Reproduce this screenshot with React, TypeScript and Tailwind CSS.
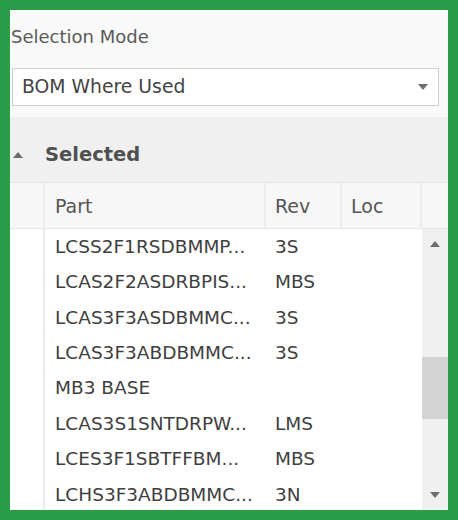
const ROWS: { part: string; rev: string }[] = [
  { part: 'LCSS2F1RSDBMMP...', rev: '3S' },
  { part: 'LCAS2F2ASDRBPIS...', rev: 'MBS' },
  { part: 'LCAS3F3ASDBMMC...', rev: '3S' },
  { part: 'LCAS3F3ABDBMMC...', rev: '3S' },
  { part: 'MB3 BASE', rev: '' },
  { part: 'LCAS3S1SNTDRPW...', rev: 'LMS' },
  { part: 'LCES3F1SBTFFBM...', rev: 'MBS' },
  { part: 'LCHS3F3ABDBMMC...', rev: '3N' },
];

function Triangle({ up }: { up?: boolean }) {
  return (
    <svg width="10" height="6" viewBox="0 0 10 6" className="fill-[#6d6d6d]">
      {up ? <path d="M5 0 L10 6 L0 6 Z" /> : <path d="M0 0 L10 0 L5 6 Z" />}
    </svg>
  );
}

export default function App() {
  return (
    <div className="w-[458px] h-[520px] bg-[#2b9d48] p-[10px]">
      <div
        className="w-full h-full bg-[#f9f9f9] flex flex-col overflow-hidden text-[#464646]"
        style={{ fontFamily: '"DejaVu Sans", "Noto Sans", sans-serif' }}
      >
        {/* Selection mode */}
        <div className="h-[58px] shrink-0 flex items-center pl-[1px] pb-[5px] text-[18px] text-[#5a5a5a]">
          Selection Mode
        </div>
        <div className="ml-[2px] mr-[9px] h-[38px] shrink-0 bg-white border border-[#cfcfcf] flex items-center pl-[9px] pr-[10px]">
          <span className="flex-1 text-[18.8px] text-[#444]">BOM Where Used</span>
          <Triangle />
        </div>
        <div className="h-[11px] shrink-0" />

        {/* Group header */}
        <div className="h-[65px] shrink-0 bg-[#f0f0f0] flex items-center pl-[3px] gap-[22px] pt-[10px]">
          <Triangle up />
          <span className="text-[19.5px] font-bold text-[#505050]">Selected</span>
        </div>

        {/* Column headers */}
        <div className="h-[47px] shrink-0 flex bg-[#f7f7f7] border-t border-[#e6e6e6] border-b border-b-[#e6e6e6] text-[19px] text-[#555]">
          <div className="w-[35px] border-r-2 border-[#ececec]" />
          <div className="w-[221px] border-r-2 border-[#ececec] flex items-center pl-[10px] pt-[1px]">Part</div>
          <div className="w-[76px] border-r-2 border-[#ececec] flex items-center pl-[9px] pt-[1px]">Rev</div>
          <div className="w-[80px] border-r-2 border-[#ececec] flex items-center pl-[9px] pt-[1px]">Loc</div>
          <div className="flex-1" />
        </div>

        {/* Rows + scrollbar */}
        <div className="flex-1 flex bg-white min-h-0">
          <div className="w-[35px] border-r-2 border-[#ececec]" />
          <div className="w-[377px] flex flex-col">
            {ROWS.map((r) => (
              <div
                key={r.part}
                className="h-[35.4px] shrink-0 flex items-center text-[18.5px] text-[#3f3f3f] whitespace-nowrap"
              >
                <div className="w-[221px] pl-[10px] overflow-hidden">{r.part}</div>
                <div className="w-[76px] pl-[9px]">{r.rev}</div>
                <div className="w-[80px]" />
              </div>
            ))}
          </div>
          <div className="flex-1 bg-[#f0f0f0] flex flex-col items-center">
            <div className="h-[30px] flex items-center">
              <Triangle up />
            </div>
            <div className="h-[98px]" />
            <div className="w-full h-[62px] bg-[#d4d4d4]" />
            <div className="flex-1" />
            <div className="h-[30px] flex items-center">
              <Triangle />
            </div>
          </div>
        </div>
      </div>
    </div>
  );
}
